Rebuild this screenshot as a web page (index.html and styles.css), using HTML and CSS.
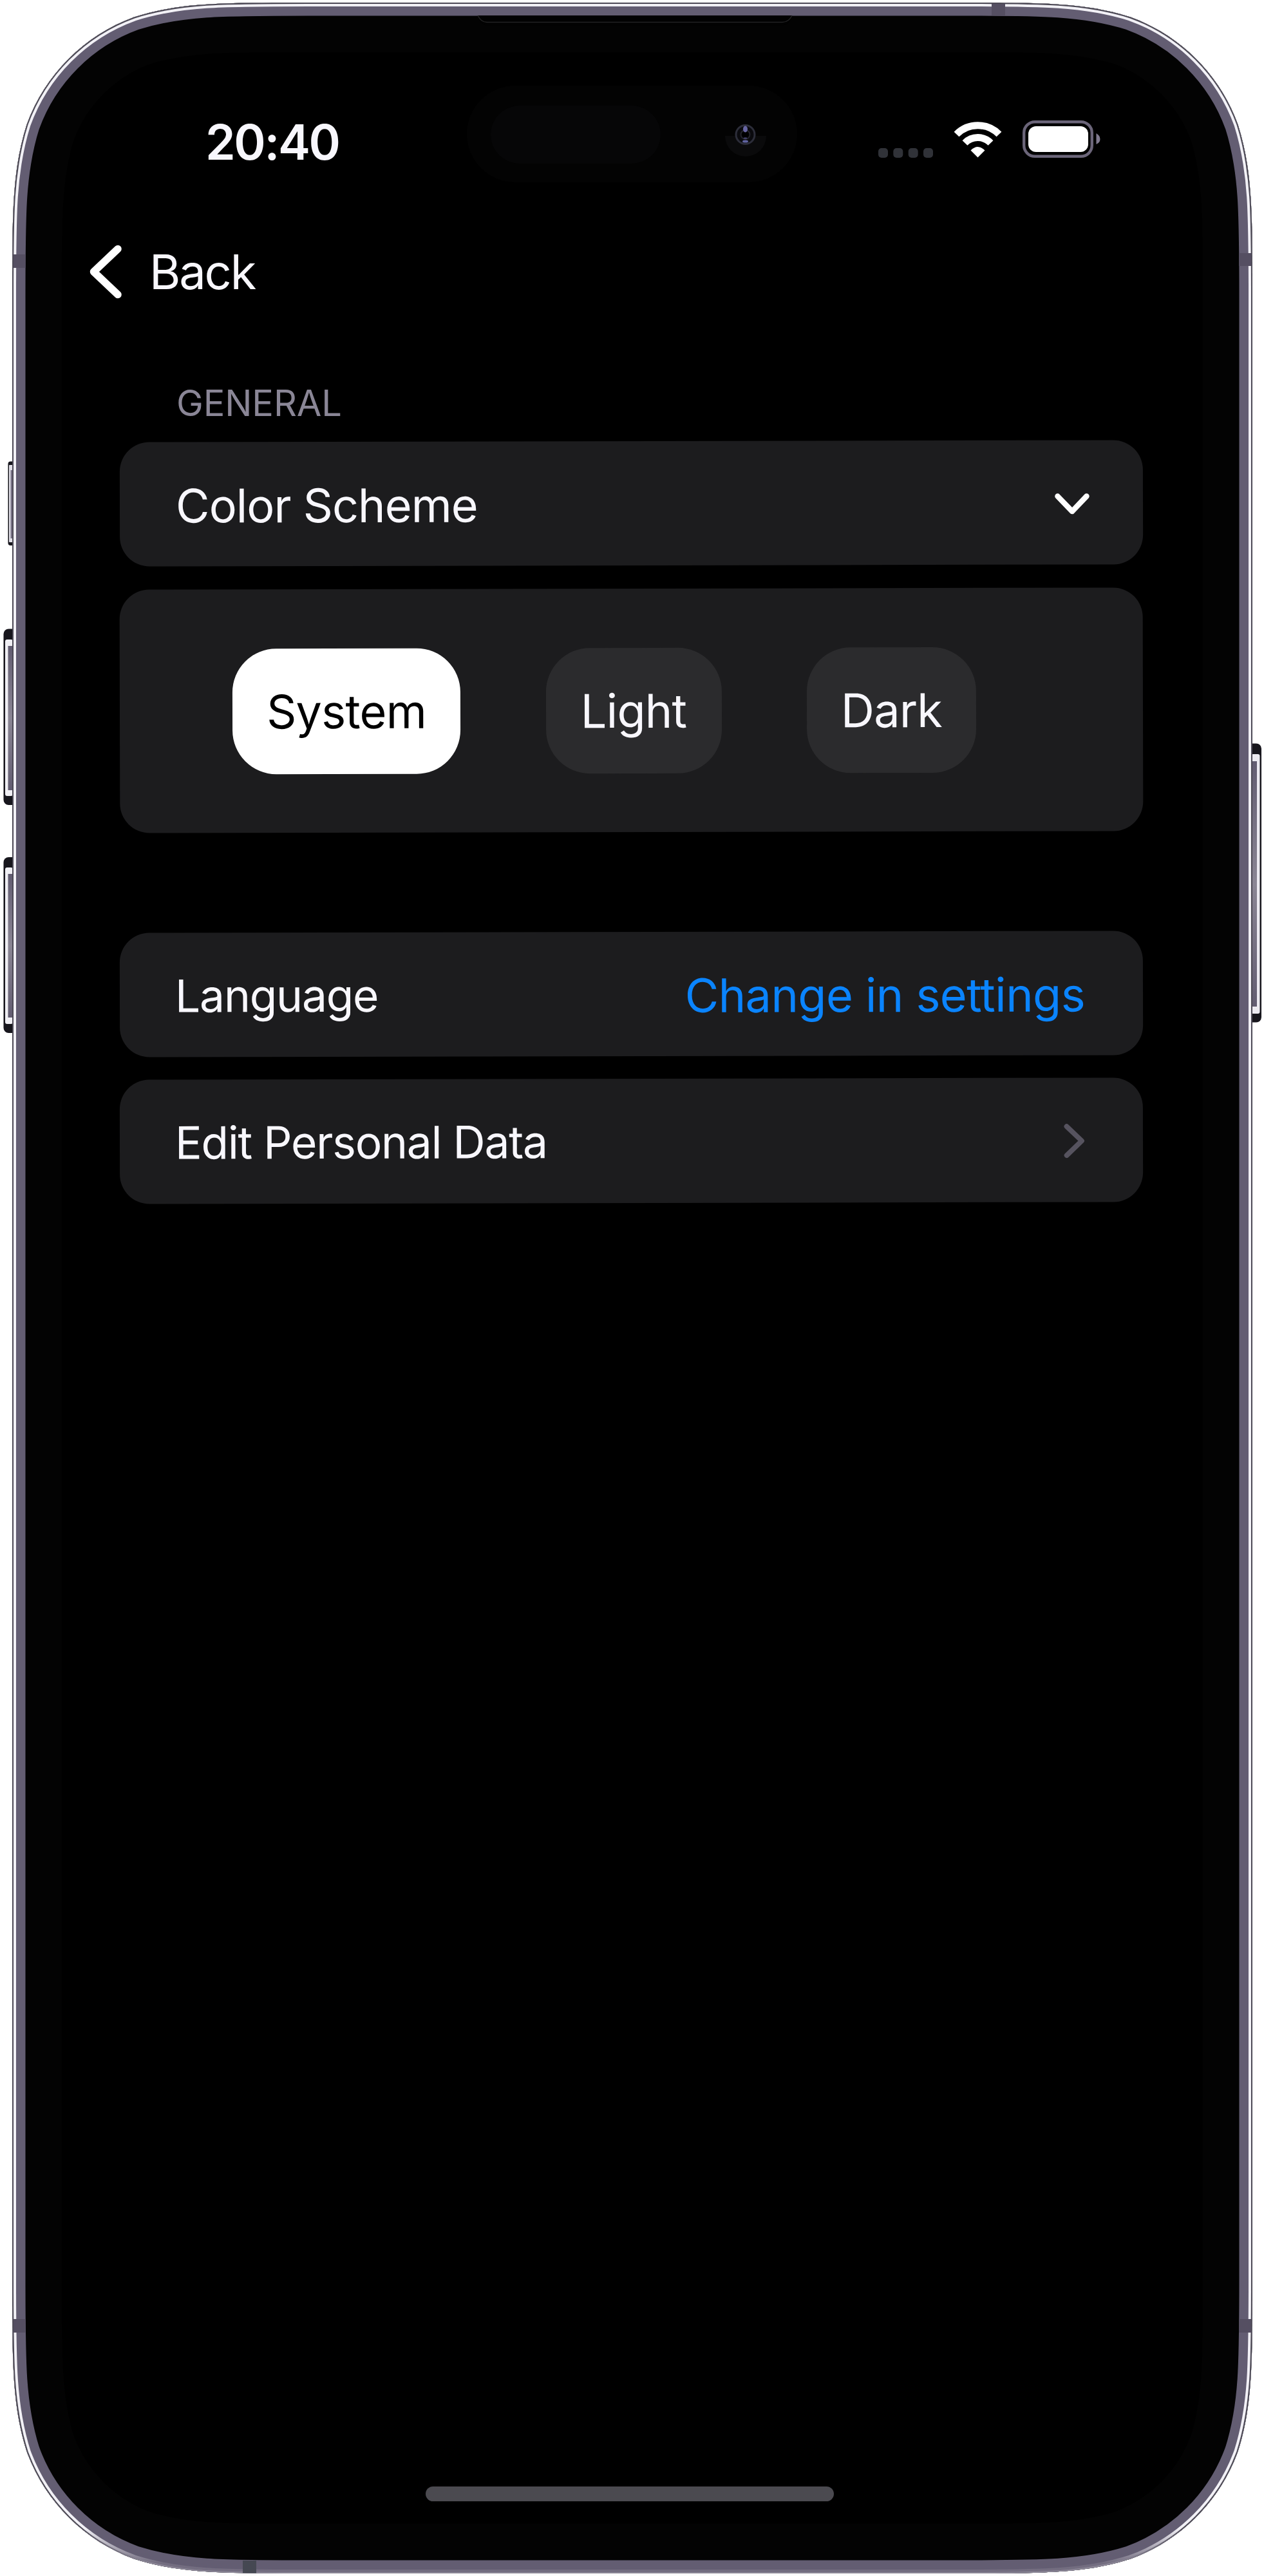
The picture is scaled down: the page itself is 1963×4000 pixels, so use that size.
FILE: index.html
```html
<!DOCTYPE html>
<html lang="en">
<head>
<meta charset="utf-8">
<title>Settings</title>
<link rel="stylesheet" href="styles.css">
</head>
<body>
<div class="phone">
  <svg class="frame" viewBox="0 0 1963 4000" aria-hidden="true">
    <defs>
      <path id="body" d="M477.6 4H1486.4C1618.5 4 1684.5 4 1755.6 26.5C1833.2 54.7 1894.3 115.8 1922.5 193.4C1945 264.5 1945 330.5 1945 462.6V3537.4C1945 3669.5 1945 3735.5 1922.5 3806.6C1894.3 3884.2 1833.2 3945.3 1755.6 3973.5C1684.5 3996 1618.5 3996 1486.4 3996H477.6C345.5 3996 279.5 3996 208.4 3973.5C130.8 3945.3 69.7 3884.2 41.5 3806.6C19 3735.5 19 3669.5 19 3537.4V462.6C19 330.5 19 264.5 41.5 193.4C69.7 115.8 130.8 54.7 208.4 26.5C279.5 4 345.5 4 477.6 4Z"/>
      <clipPath id="bodyClip"><use href="#body"/></clipPath>
      <linearGradient id="shine" gradientUnits="userSpaceOnUse" x1="0" y1="3925" x2="0" y2="3980">
        <stop offset="0" stop-color="#f2f1f6"/><stop offset="1" stop-color="#736d80"/>
      </linearGradient>
      <linearGradient id="rim" gradientUnits="userSpaceOnUse" x1="0" y1="3925" x2="0" y2="3980">
        <stop offset="0" stop-color="#4c4955"/><stop offset="1" stop-color="#8b8696"/>
      </linearGradient>
      <linearGradient id="key" x1="0" y1="0" x2="0" y2="1">
        <stop offset="0" stop-color="#625c71"/><stop offset=".5" stop-color="#8a8594"/><stop offset="1" stop-color="#625c71"/>
      </linearGradient>
    </defs>

    <!-- side buttons -->
    <g>
      <rect x="12.500" y="716.500" width="14" height="130.500" rx="4" fill="#17161d"/>
      <rect x="14" y="722" width="6" height="120" rx="1" fill="#e2e0e8"/>
      <rect x="16.500" y="730" width="3.500" height="106" fill="#777185"/>
    </g>
    <g>
      <rect x="5.500" y="976.500" width="22" height="273.500" rx="8" fill="#17161d"/>
      <rect x="8" y="993" width="12" height="243" rx="3" fill="#f0eff4"/>
      <rect x="12.500" y="1003" width="7.500" height="224" fill="url(#key)"/>
    </g>
    <g>
      <rect x="5.500" y="1331" width="22" height="273" rx="8" fill="#17161d"/>
      <rect x="8" y="1347" width="12" height="243" rx="3" fill="#f0eff4"/>
      <rect x="12.500" y="1357" width="7.500" height="223" fill="url(#key)"/>
    </g>
    <g>
      <rect x="1936" y="1154.500" width="23" height="433" rx="8" fill="#17161d"/>
      <rect x="1943" y="1171" width="13.500" height="403" rx="3" fill="#eceaf1"/>
      <rect x="1943" y="1182" width="9" height="381" fill="url(#key)"/>
    </g>

    <use href="#body" fill="#000"/>
    <g clip-path="url(#bodyClip)" fill="none">
      <use href="#body" stroke="#030303" stroke-width="154"/>
      <use href="#body" stroke="#635d72" stroke-width="41"/>
      <use href="#body" stroke="url(#shine)" stroke-width="12"/>
      <use href="#body" stroke="url(#rim)" stroke-width="4"/>
      <g fill="#554f62">
        <rect x="21" y="395" width="18.500" height="21"/>
        <rect x="1924" y="393" width="19" height="20"/>
        <rect x="1540" y="6" width="21" height="18"/>
        <rect x="21" y="3601" width="18.500" height="21"/>
        <rect x="1924" y="3601" width="19" height="21"/>
        <rect x="377" y="3976" width="21" height="20" fill="#454852"/>
      </g>
    </g>

    <!-- earpiece, sensor island and camera -->
    <path d="M742 24Q746 39 756 39.500H1215Q1226 39 1230 24" fill="#020202" stroke="none"/>
    <path d="M742 24Q747 34.500 756 34.500H1215Q1225 34.500 1230 24" fill="#020202" stroke="#222223" stroke-width="1.500"/>
    <rect x="725" y="133" width="513" height="150" rx="75" fill="#030303"/>
    <rect x="762" y="164" width="264" height="90" rx="45" fill="#060607"/>
    <path d="M1126 211A32 32 0 0 0 1190 211Z" fill="#0a0a0b"/>
    <circle cx="1157.500" cy="209" r="14.500" fill="#0a0a0e" stroke="#2c2d39" stroke-width="3"/>
    <circle cx="1157.500" cy="209" r="7" fill="#000" stroke="#24242b" stroke-width="2"/>
    <ellipse cx="1157.500" cy="200.500" rx="3.500" ry="5" fill="#6765a2"/>
    <ellipse cx="1157.500" cy="219.500" rx="4.500" ry="2" fill="#6063a0"/>
    <ellipse cx="1157.500" cy="214.500" rx="3" ry="1" fill="#4d4b80"/>
  </svg>

  <main class="screen">
    <header class="status">
      <span class="time">20:40</span>
      <div class="indicators">
        <svg class="signal" viewBox="0 0 85 15"><g fill="#303238"><rect width="15" height="15" rx="5"/><rect x="23.300" width="15" height="15" rx="5"/><rect x="46.700" width="15" height="15" rx="5"/><rect x="70" width="15" height="15" rx="5"/></g></svg>
        <svg class="wifi" viewBox="0 0 74 56"><g fill="none" stroke="#fff" stroke-width="11"><path d="M4 19.500A46.500 46.500 0 0 1 70 19.500"/><path d="M17 33A28 28 0 0 1 57 33"/></g><path d="M26 44.500Q37 33.500 48 44.500L37 55.500Z" fill="#fff"/></svg>
        <svg class="battery" viewBox="0 0 121 58"><rect x="2.200" y="2.200" width="105.600" height="53.600" rx="17" fill="none" stroke="#6b6579" stroke-width="4.400"/><rect x="9" y="9" width="93" height="40" rx="12" fill="#fff"/><path d="M114.500 20Q120.500 23.500 120.500 29T114.500 37Z" fill="#817b90"/></svg>
      </div>
    </header>

    <nav class="nav">
      <svg class="back-icon" viewBox="0 0 50 84"><path d="M44 6.500L6.500 42L44 77.500" fill="none" stroke="#fff" stroke-width="11.500" stroke-linecap="round" stroke-linejoin="round"/></svg>
      <span class="back">Back</span>
    </nav>

    <h2 class="section">GENERAL</h2>

    <section class="card row scheme">
      <span>Color Scheme</span>
      <svg class="down" viewBox="0 0 54 34"><path d="M4.500 5L27 28.500L49.500 5" fill="none" stroke="#fff" stroke-width="8.500" stroke-linecap="round" stroke-linejoin="round"/></svg>
    </section>

    <section class="card options">
      <span class="chip system selected">System</span>
      <span class="chip light">Light</span>
      <span class="chip dark">Dark</span>
    </section>

    <section class="card row language">
      <span class="label">Language</span>
      <a class="link">Change in settings</a>
    </section>

    <section class="card row">
      <span class="label">Edit Personal Data</span>
      <svg class="next" viewBox="0 0 33 54"><path d="M4.500 4.500L28 27L4.500 49.500" fill="none" stroke="#56535f" stroke-width="7.800" stroke-linecap="round" stroke-linejoin="round"/></svg>
    </section>

    <div class="home"></div>
  </main>
</div>
</body>
</html>
```
FILE: styles.css
```css
* { box-sizing: border-box; }

body {
  margin: 0;
  background: #fff;
}

.phone {
  position: relative;
  width: 1963px;
  height: 4000px;
  overflow: hidden;
  font-family: Inter, "Liberation Sans", sans-serif;
  font-size: 72px;
  line-height: 90px;
  letter-spacing: -0.8px;
  color: #f8f7fd;
  white-space: nowrap;
}

.frame {
  position: absolute;
  inset: 0;
  width: 1963px;
  height: 4000px;
}

.screen {
  position: relative;
  display: flex;
  flex-direction: column;
  height: 4000px;
  padding: 176px 188px 116px 186px;
}

.status {
  display: flex;
  justify-content: space-between;
  align-items: center;
  height: 90px;
  padding: 0 66px 0 133px;
}

.time {
  font-size: 75px;
  font-weight: 600;
  letter-spacing: -2.4px;
}

.indicators {
  display: flex;
  align-items: flex-end;
  margin-top: -10px;
}

.signal { width: 85px; height: 15px; margin-right: 32px; }
.wifi { width: 75px; height: 56px; margin-right: 32px; }
.battery { width: 121px; height: 58px; }

.nav {
  display: flex;
  align-items: center;
  height: 90px;
  margin: 111px 0 0 -47px;
}

.back-icon { width: 50px; height: 84px; margin-right: 43px; }

.back {
  font-size: 74px;
  letter-spacing: -2.2px;
}

.section {
  height: 70px;
  margin: 124px 0 24px 88px;
  font-size: 56px;
  font-weight: 400;
  line-height: 70px;
  letter-spacing: -0.1px;
  color: #8a8696;
}

.card {
  width: 1589px;
  margin-bottom: 36px;
  border-radius: 46px;
  background: #1c1c1e;
  transform: rotate(-0.12deg);
}

.row {
  display: flex;
  justify-content: space-between;
  align-items: center;
  height: 192.5px;
  padding: 4px 90px 0 86px;
}

.scheme {
  padding: 6px 83px 0 87px;
  letter-spacing: -1px;
}

.down { width: 54px; height: 34px; }
.next { width: 33px; height: 54px; }

.options {
  display: flex;
  align-items: center;
  gap: 132.5px;
  height: 378px;
  padding-left: 175px;
}

.chip {
  display: flex;
  justify-content: center;
  align-items: center;
  height: 195px;
  padding-top: 1px;
  border-radius: 68px;
  background: #2b2b2d;
}

.system { width: 354px; }
.light { width: 273px; }
.dark { width: 263px; }

.selected {
  background: #fff;
  color: #000;
}

.language { margin-top: 119px; }

.label {
  font-size: 69.5px;
  letter-spacing: -1.25px;
}

.link {
  padding-top: 2px;
  letter-spacing: -0.6px;
  color: #0a84ff;
}

.home {
  width: 634px;
  height: 23px;
  margin: auto auto 0 475px;
  border-radius: 12px;
  background: #4b4a50;
}
```
